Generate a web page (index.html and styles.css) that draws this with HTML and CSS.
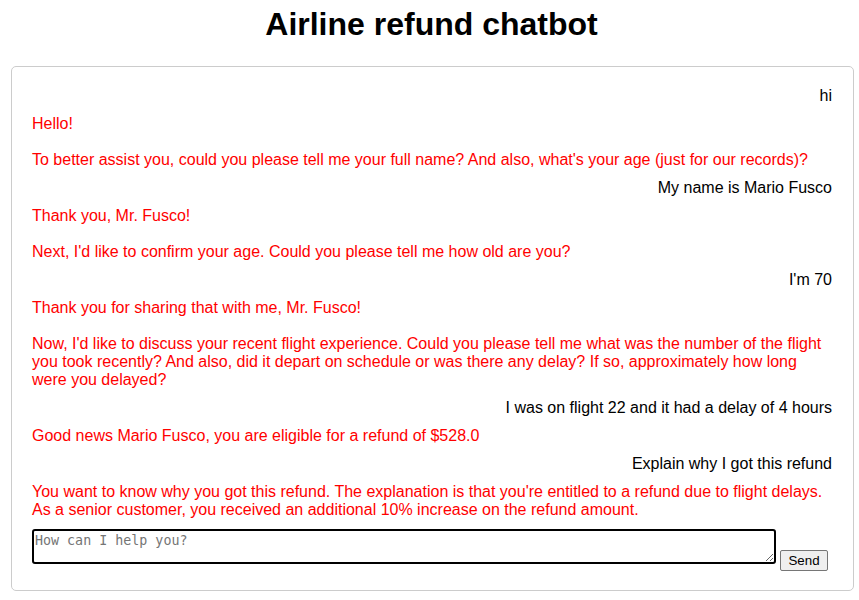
FILE: index.html
```html
<!DOCTYPE html>
<html>
<head>
<meta charset="utf-8">
<title>Airline refund chatbot</title>
<link rel="stylesheet" href="styles.css">
</head>
<body>
<h1 class="title">Airline refund chatbot</h1>
<div class="chat">
  <div class="messages">
    <div class="msg user">hi</div>
    <div class="msg bot">Hello!<br><br>To better assist you, could you please tell me your full name? And also, what's your age (just for our records)?</div>
    <div class="msg user">My name is Mario Fusco</div>
    <div class="msg bot">Thank you, Mr. Fusco!<br><br>Next, I'd like to confirm your age. Could you please tell me how old are you?</div>
    <div class="msg user">I'm 70</div>
    <div class="msg bot">Thank you for sharing that with me, Mr. Fusco!<br><br>Now, I'd like to discuss your recent flight experience. Could you please tell me what was the number of the flight you took recently? And also, did it depart on schedule or was there any delay? If so, approximately how long were you delayed?</div>
    <div class="msg user">I was on flight 22 and it had a delay of 4 hours</div>
    <div class="msg bot">Good news Mario Fusco, you are eligible for a refund of $528.0</div>
    <div class="msg user">Explain why I got this refund</div>
    <div class="msg bot">You want to know why you got this refund. The explanation is that you're entitled to a refund due to flight delays. As a senior customer, you received an additional 10% increase on the refund amount.</div>
  </div>
  <div class="input-row">
    <textarea class="input" placeholder="How can I help you?"></textarea>
    <button class="send">Send</button>
  </div>
</div>
</body>
</html>
```

FILE: styles.css
```css
html, body {
  margin: 0;
  padding: 0;
  background: #ffffff;
}

body {
  font-family: "Liberation Sans", Arial, sans-serif;
}

.title {
  margin: 0 0 23px 0;
  padding: 6px 0 0 4px;
  font-size: 32px;
  line-height: 37px;
  font-weight: bold;
  text-align: center;
  color: #000;
}

.chat {
  margin: 0 5px 0 11px;
  width: 843px;
  height: 525px;
  box-sizing: border-box;
  border: 1px solid #cccccc;
  border-radius: 5px;
  padding: 20px 21px 20px 20px;
  display: flex;
  flex-direction: column;
}

.messages {
  display: flex;
  flex-direction: column;
  gap: 10px;
}

.msg {
  font-size: 16px;
  line-height: 18px;
}

.user {
  text-align: right;
  color: #000;
}

.bot {
  text-align: left;
  color: #ff0000;
}

.input-row {
  margin-top: 10px;
  display: flex;
  align-items: flex-start;
  gap: 4px;
}

.input {
  width: 744px;
  height: 35px;
  box-sizing: border-box;
  margin: 0;
  border: 2px solid #000;
  border-radius: 3px;
  padding: 2px 1px;
  font-family: "DejaVu Sans Mono", "Liberation Mono", monospace;
  font-size: 13.33px;
  resize: vertical;
  outline: none;
}

.input::placeholder {
  color: #757575;
}

.send {
  margin-top: 21px;
  width: 48px;
  height: 21px;
  box-sizing: border-box;
  padding: 1px 6px;
  font-family: "Liberation Sans", Arial, sans-serif;
  font-size: 13.33px;
  color: #000;
  background: #efefef;
  border: 1px solid #767676;
  border-radius: 2px;
}
```
